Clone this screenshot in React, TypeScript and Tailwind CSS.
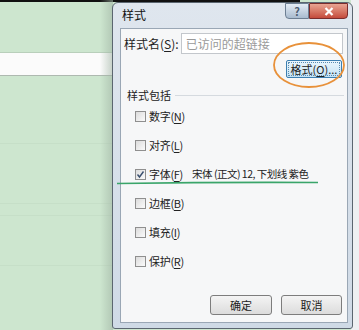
import React from 'react';

const font = "font-['Noto_Sans_CJK_SC','Noto_Sans',sans-serif]";

const Key: React.FC<{ k: string }> = ({ k }) => <span className="underline underline-offset-2">{k}</span>;

const CheckRow: React.FC<{ label: string; k: string; checked?: boolean; extra?: string }> = ({ label, k, checked, extra }) => (
  <div className="h-[29px] flex items-center pl-[14px] text-[11px] text-[#222]">
    <div className="w-[11px] h-[11px] border border-[#8f8f8f] bg-gradient-to-br from-[#dcdcdc] to-[#fbfbfb] flex items-center justify-center">
      {checked && (
        <svg width="9" height="9" viewBox="0 0 9 9">
          <path d="M1.5 4.5 L3.5 7 L7.5 1.5" fill="none" stroke="#3a4f6e" strokeWidth="1.4" />
        </svg>
      )}
    </div>
    <span className="ml-[3px] tracking-[-0.3px]">
      {label}(<Key k={k} />)
    </span>
    {extra && <span className="ml-[9px] text-[10.5px] tracking-[-0.5px]">{extra}</span>}
  </div>
);

export default function App() {
  return (
    <div className={`relative w-[359px] h-[330px] overflow-hidden bg-[#cde6cf] ${font}`}>
      {/* spreadsheet backdrop */}
      <div className="h-[2px] w-[300px] bg-[#111]" />
      <div className="h-[51px] border-b border-[#b9cfbb]" />
      <div className="h-[23px] bg-[#fbfbfb] border-b border-[#aeb9b0]" />
      <div className="h-[68px] border-b border-[#c6dfc8]" />
      <div className="h-[60px] border-b border-[#c6dfc8]" />
      <div className="h-[12px] border-b border-[#c6dfc8]" />
      <div className="h-[50px] border-b border-[#c6dfc8]" />
      <div className="absolute left-[100px] top-0 w-[13px] h-[330px] bg-gradient-to-r from-transparent to-[#9fb3a3]/60" />
      <div className="absolute right-0 top-0 w-[8px] h-[330px] bg-[#eef0f2]" />

      {/* dialog window */}
      <div className="absolute left-[112px] top-[2px] w-[241px] h-[327px] rounded-t-[6px] rounded-b-[3px] border border-[#5b6670] bg-gradient-to-b from-[#dfe6ee] to-[#cfdae6] flex flex-col pl-[7px] pr-[4px] pb-[5px]">
        <div className="h-[25px] flex items-start">
          <span className="mt-[3px] ml-[2px] text-[12px] text-[#111]">样式</span>
          <div className="ml-auto flex">
            <div className="w-[24px] h-[16px] rounded-bl-[4px] border border-[#6d7f93] bg-gradient-to-b from-[#e4ecf5] to-[#a9bbcf] flex items-center justify-center text-[11px] font-bold text-[#4c5c70] leading-none">?</div>
            <div className="w-[39px] h-[16px] rounded-br-[4px] border border-[#7a2d2d] bg-gradient-to-b from-[#e8a593] to-[#c44a3c] flex items-center justify-center">
              <svg width="10" height="9" viewBox="0 0 10 9">
                <path d="M1.5 1 L8.5 8 M8.5 1 L1.5 8" stroke="#fff" strokeWidth="2.2" />
              </svg>
            </div>
          </div>
        </div>

        <div className="flex-1 border border-[#9aa7b5] bg-[#f6f7f8] flex flex-col">
          <div className="flex items-center pt-[4px] pl-[3px]">
            <span className="text-[12px] text-[#222]">
              样式名(<Key k="S" />):
            </span>
            <div className="ml-[2px] w-[162px] h-[21px] border border-[#c3c7cc] bg-white flex items-center pl-[4px] text-[12px] text-[#9a9a9a]">
              已访问的超链接
            </div>
          </div>

          <div className="flex justify-end pr-[5px] pt-[6px]">
            <div className="relative w-[56px] h-[18px] border border-[#3c7fb1] rounded-[2px] bg-gradient-to-b from-[#eaf6fd] to-[#c4e2f4] flex items-center justify-center text-[11px] text-[#222]">
              <div className="absolute inset-[1px] border border-dotted border-[#5a8bb0]" />
              <span>
                格式(<Key k="O" />)...
              </span>
            </div>
          </div>

          <div className="flex items-center pl-[6px] pt-[9px] pr-[3px]">
            <span className="text-[11px] text-[#222]">样式包括</span>
            <div className="flex-1 ml-[4px] h-px bg-[#d5dadf]" />
          </div>

          <div className="flex flex-col -mt-[2px]">
            <CheckRow label="数字" k="N" />
            <CheckRow label="对齐" k="L" />
            <CheckRow label="字体" k="F" checked extra="宋体 (正文) 12, 下划线 紫色" />
            <CheckRow label="边框" k="B" />
            <CheckRow label="填充" k="I" />
            <CheckRow label="保护" k="R" />
          </div>

          <div className="mt-auto flex justify-end gap-[9px] pr-[5px] pb-[7px]">
            <div className="w-[62px] h-[20px] border border-[#7d7d7d] rounded-[3px] bg-gradient-to-b from-[#f4f4f4] to-[#dcdcdc] flex items-center justify-center text-[11px] text-[#222]">确定</div>
            <div className="w-[61px] h-[20px] border border-[#7d7d7d] rounded-[3px] bg-gradient-to-b from-[#f4f4f4] to-[#dcdcdc] flex items-center justify-center text-[11px] text-[#222]">取消</div>
          </div>
        </div>
      </div>

      {/* annotations */}
      <svg className="absolute left-0 top-0" width="359" height="330" viewBox="0 0 359 330">
        <ellipse cx="309" cy="65" rx="35" ry="22" fill="none" stroke="#e8913a" strokeWidth="1.8" />
        <path d="M117 183.5 Q 220 182 318 182.5" fill="none" stroke="#3aa56a" strokeWidth="1.6" />
      </svg>
    </div>
  );
}
